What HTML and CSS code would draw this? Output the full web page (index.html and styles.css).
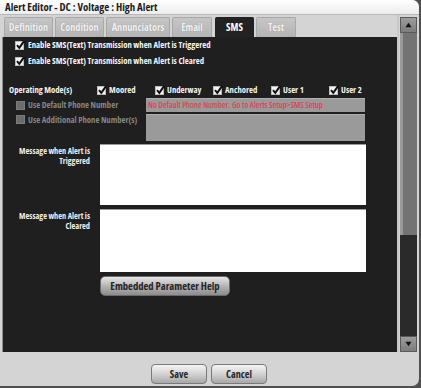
FILE: index.html
```html
<!DOCTYPE html>
<html>
<head>
<meta charset="utf-8">
<title>Alert Editor</title>
<link rel="stylesheet" href="styles.css">
</head>
<body>
<div class="win">
  <div class="titlebar">Alert Editor - DC : Voltage : High Alert</div>
  <div class="main">
    <div class="left">
      <div class="tabs">
        <div class="tab w-def">Definition</div>
        <div class="tab w-cond">Condition</div>
        <div class="tab w-ann">Annunciators</div>
        <div class="tab w-email">Email</div>
        <div class="tab active w-sms">SMS</div>
        <div class="tab w-test">Test</div>
      </div>
      <div class="panel">
        <div class="chk-row">
          <svg class="cb" viewBox="0 0 10 10"><rect x="0.5" y="1.5" width="8" height="8" fill="#f2f2f2" stroke="#bbb"/><path d="M2 5.2 L4.3 7.8 L9.2 0.8" fill="none" stroke="#111" stroke-width="2"/></svg>
          <span>Enable SMS(Text) Transmission when Alert is Triggered</span>
        </div>
        <div class="chk-row">
          <svg class="cb" viewBox="0 0 10 10"><rect x="0.5" y="1.5" width="8" height="8" fill="#f2f2f2" stroke="#bbb"/><path d="M2 5.2 L4.3 7.8 L9.2 0.8" fill="none" stroke="#111" stroke-width="2"/></svg>
          <span>Enable SMS(Text) Transmission when Alert is Cleared</span>
        </div>
        <div class="modes">
          <div class="modes-label">Operating Mode(s)</div>
          <div class="mode"><svg class="cb" viewBox="0 0 10 10"><rect x="0.5" y="1.5" width="8" height="8" fill="#f2f2f2" stroke="#bbb"/><path d="M2 5.2 L4.3 7.8 L9.2 0.8" fill="none" stroke="#111" stroke-width="2"/></svg><span>Moored</span></div>
          <div class="mode"><svg class="cb" viewBox="0 0 10 10"><rect x="0.5" y="1.5" width="8" height="8" fill="#f2f2f2" stroke="#bbb"/><path d="M2 5.2 L4.3 7.8 L9.2 0.8" fill="none" stroke="#111" stroke-width="2"/></svg><span>Underway</span></div>
          <div class="mode"><svg class="cb" viewBox="0 0 10 10"><rect x="0.5" y="1.5" width="8" height="8" fill="#f2f2f2" stroke="#bbb"/><path d="M2 5.2 L4.3 7.8 L9.2 0.8" fill="none" stroke="#111" stroke-width="2"/></svg><span>Anchored</span></div>
          <div class="mode"><svg class="cb" viewBox="0 0 10 10"><rect x="0.5" y="1.5" width="8" height="8" fill="#f2f2f2" stroke="#bbb"/><path d="M2 5.2 L4.3 7.8 L9.2 0.8" fill="none" stroke="#111" stroke-width="2"/></svg><span>User 1</span></div>
          <div class="mode"><svg class="cb" viewBox="0 0 10 10"><rect x="0.5" y="1.5" width="8" height="8" fill="#f2f2f2" stroke="#bbb"/><path d="M2 5.2 L4.3 7.8 L9.2 0.8" fill="none" stroke="#111" stroke-width="2"/></svg><span>User 2</span></div>
        </div>
        <div class="phone-row one">
          <div class="phone-label"><span class="cb-dis"></span><span>Use Default Phone Number</span></div>
          <div class="field f-default">No Default Phone Number. Go to Alerts Setup&gt;SMS Setup</div>
        </div>
        <div class="phone-row two">
          <div class="phone-label"><span class="cb-dis"></span><span>Use Additional Phone Number(s)</span></div>
          <div class="field f-add"></div>
        </div>
        <div class="msg-row trig">
          <div class="msg-label">Message when Alert is<br>Triggered</div>
          <div class="textarea"></div>
        </div>
        <div class="msg-row clear">
          <div class="msg-label">Message when Alert is<br>Cleared</div>
          <div class="textarea"></div>
        </div>
        <div class="help-row">
          <button class="btn help">Embedded Parameter Help</button>
        </div>
      </div>
    </div>
    <div class="scroll">
      <div class="sb-btn"><svg viewBox="0 0 8 6"><path d="M4 0.5 L7.5 5.5 L0.5 5.5 Z" fill="#111"/></svg></div>
      <div class="thumb"></div>
      <div class="track"></div>
      <div class="sb-btn"><svg viewBox="0 0 8 6"><path d="M0.5 0.5 L7.5 0.5 L4 5.5 Z" fill="#111"/></svg></div>
    </div>
  </div>
  <div class="footer">
    <button class="btn foot">Save</button>
    <button class="btn foot">Cancel</button>
  </div>
</div>
</body>
</html>
```
FILE: styles.css
```css
* { box-sizing: border-box; }
html, body { margin: 0; padding: 0; }
body {
  background: #505050;
  font-family: "Open Sans", "Liberation Sans", sans-serif;
  font-stretch: 75%;
  font-weight: 700;
  font-size: 8.7px;
  width: 421px;
  height: 388px;
  overflow: hidden;
}
.win {
  width: 419px;
  height: 386px;
  background: #d4d4d4;
  border-radius: 0 7px 7px 0;
  display: flex;
  flex-direction: column;
  overflow: hidden;
}
.titlebar {
  height: 15px;
  line-height: 13px;
  padding-left: 5px;
  font-size: 10.8px;
  color: #1c1c1c;
  background: linear-gradient(#ffffff, #ececec);
  border-bottom: 1px solid #b8b8b8;
}
.main {
  display: flex;
  height: 337px;
}
.left {
  width: 397px;
  padding-left: 2px;
  display: flex;
  flex-direction: column;
}
.tabs {
  height: 22px;
  display: flex;
  align-items: flex-end;
  gap: 2px;
  padding-left: 2px;
}
.tab {
  height: 20px;
  line-height: 19px;
  text-align: center;
  font-size: 10.2px;
  color: #f2f2f2;
  text-shadow: 0 0 1px #8a8a8a;
  background: linear-gradient(#c6c6c6, #b4b4b4);
  border: 1px solid #a8a8a8;
  border-bottom: none;
  border-radius: 2px 2px 0 0;
}
.tab.active {
  background: #222;
  border-color: #222;
  color: #fff;
  text-shadow: none;
}
.w-def { width: 49px; }
.w-cond { width: 49px; }
.w-ann { width: 64px; }
.w-email { width: 40px; }
.w-sms { width: 39px; margin-left: 1px; }
.w-test { width: 40px; }
.panel {
  height: 315px;
  background: #1f1f1f;
  border-left: 1px solid #8c8c8c;
  color: #f4f4f4;
  display: flex;
  flex-direction: column;
}
.cb { width: 10px; height: 10px; flex: none; }
.chk-row {
  height: 16px;
  display: flex;
  align-items: center;
  gap: 3px;
  padding-left: 12px;
}
.modes {
  margin-top: 13px;
  height: 16px;
  display: flex;
  align-items: center;
  padding-left: 6px;
}
.modes-label { width: 88px; }
.mode {
  width: 58px;
  display: flex;
  align-items: center;
  gap: 2px;
}
.phone-row {
  display: flex;
  align-items: flex-start;
}
.phone-row.two { margin-top: 2px; }
.phone-label {
  width: 143px;
  padding-left: 13px;
  display: flex;
  align-items: center;
  gap: 3px;
  height: 14px;
  color: #858585;
}
.phone-row.two .phone-label { height: 11px; }
.cb-dis {
  width: 9px;
  height: 9px;
  background: #6c6c6c;
  border: 1px solid #7c7c7c;
  flex: none;
}
.field {
  width: 219px;
  background: #9a9a9a;
  border-top: 1px solid #b0b0b0;
}
.f-default {
  height: 14px;
  line-height: 12px;
  padding-left: 2px;
  color: #e23c58;
  font-weight: 600;
  font-size: 8.4px;
  white-space: nowrap;
}
.f-add { height: 27px; }
.msg-row {
  display: flex;
  gap: 10px;
}
.msg-row.trig { margin-top: 3px; }
.msg-row.clear { margin-top: 4px; }
.msg-label {
  width: 87px;
  text-align: right;
  font-size: 8.3px;
  line-height: 10px;
  padding-top: 2px;
  color: #eee;
}
.textarea {
  width: 266px;
  background: #fff;
  border-top: 1px solid #9a9a9a;
}
.trig .textarea { height: 61px; }
.clear .textarea { height: 63px; }
.help-row {
  margin-top: 4px;
  padding-left: 97px;
}
.btn {
  font-family: inherit;
  font-stretch: 75%;
  font-weight: 700;
  color: #252525;
  padding: 0;
  cursor: default;
}
.btn.help {
  width: 130px;
  height: 20px;
  font-size: 10.6px;
  border-radius: 5px;
  border: 1px solid #6a6a6a;
  background: linear-gradient(#e6e6e6, #b0b0b0 55%, #8c8c8c);
}
.scroll {
  width: 20px;
  padding-top: 2px;
  display: flex;
  flex-direction: column;
  border-left: 2px solid #c8c8c8;
}
.sb-btn {
  height: 16px;
  width: 17px;
  margin-left: 1px;
  background: linear-gradient(#9c9c9c, #7c7c7c);
  border: 1px solid #5a5a5a;
  display: flex;
  align-items: center;
  justify-content: center;
}
.sb-btn svg { width: 7px; height: 6px; }
.thumb {
  height: 202px;
  width: 17px;
  margin-left: 1px;
  background: #737373;
  border-left: 3px solid #9a9a9a;
}
.track {
  flex: 1;
  width: 17px;
  margin-left: 1px;
  background: #2a2a2a;
}
.footer {
  flex: 1;
  display: flex;
  justify-content: center;
  gap: 4px;
  padding-top: 12px;
  padding-right: 1px;
}
.btn.foot {
  width: 56px;
  height: 20px;
  font-size: 10.2px;
  border-radius: 4px;
  border: 1px solid #7a7a7a;
  background: linear-gradient(#f4f4f4, #cfcfcf 55%, #a6a6a6);
}
```
